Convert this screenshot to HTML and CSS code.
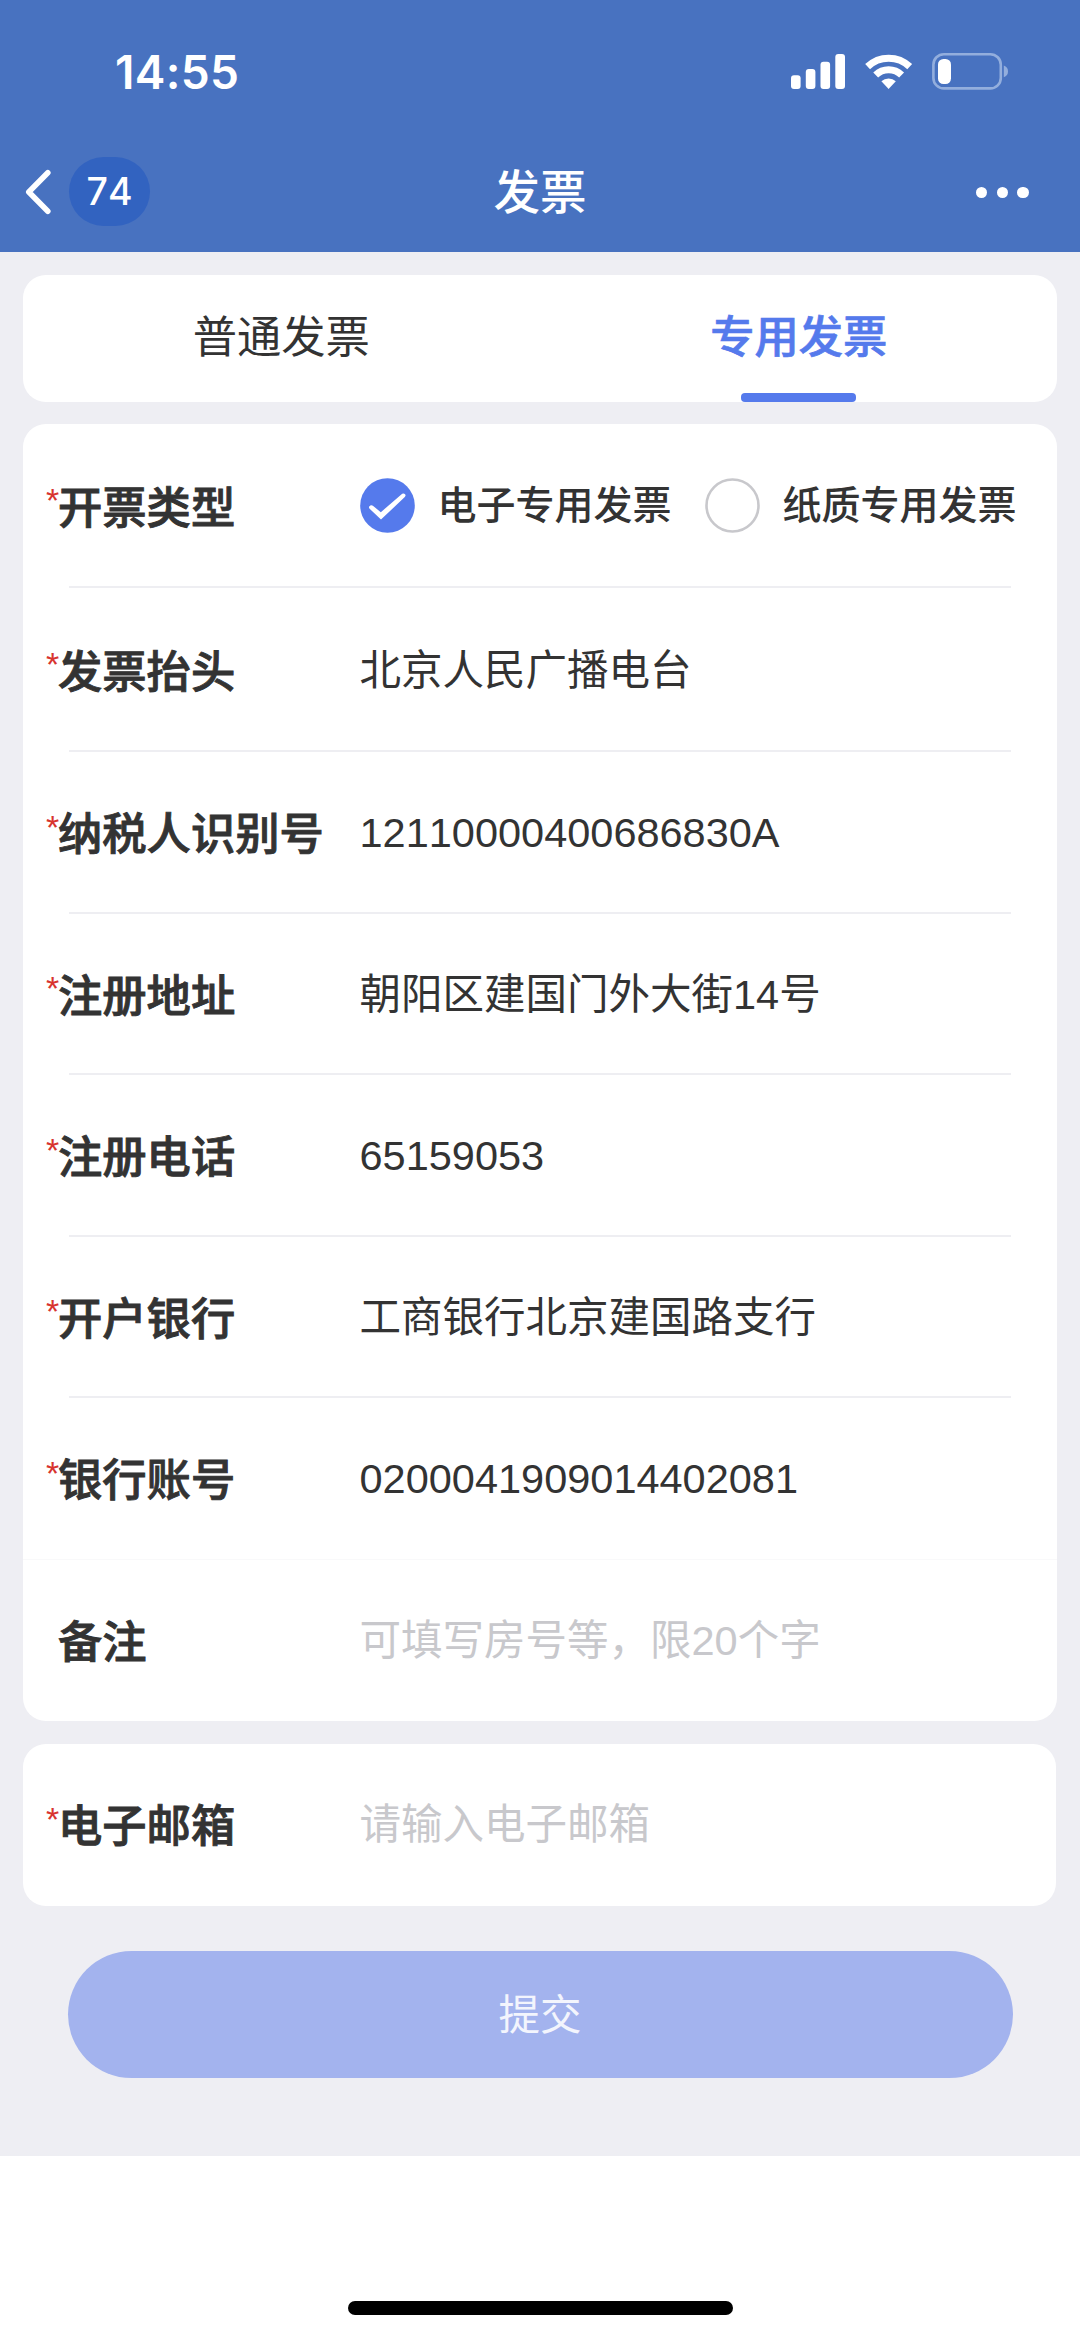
FILE: index.html
```html
<!DOCTYPE html>
<html lang="zh-CN">
<head>
  <meta charset="UTF-8">
  <meta name="viewport" content="width=device-width, initial-scale=1.0">
  <title>发票</title>
  <link rel="stylesheet" href="styles.css">
</head>
<body>
  <header class="header">
    <div class="status-bar">
      <span class="time">14:55</span>
      <svg class="status-icons" width="220" height="40" viewBox="0 0 220 40">
        <!-- signal -->
        <g fill="#fff">
          <rect x="2" y="23.3" width="9.6" height="13.7" rx="3"/>
          <rect x="16.8" y="17" width="9.6" height="20" rx="3"/>
          <rect x="31.5" y="9.7" width="9.6" height="27.3" rx="3"/>
          <rect x="46.3" y="2" width="9.7" height="35" rx="3"/>
        </g>
        <!-- wifi -->
        <g fill="none" stroke="#fff" stroke-width="7">
          <path d="M78.6 14.6 A30.5 30.5 0 0 1 120.7 14.6"/>
          <path d="M86.7 22.9 A18.6 18.6 0 0 1 112.6 22.9"/>
        </g>
        <path d="M99.6 37 L92.4 29.3 A10.5 10.5 0 0 1 106.8 29.3 Z" fill="#fff"/>
        <!-- battery -->
        <rect x="144.4" y="2.2" width="67.4" height="34.2" rx="10.5" fill="none" stroke="#93aedd" stroke-width="2.6"/>
        <rect x="149" y="7" width="13" height="25" rx="5.5" fill="#fff"/>
        <path d="M214.8 13.6 Q219 15.2 219 19.4 Q219 23.6 214.8 25.2 Z" fill="#93aedd"/>
      </svg>
    </div>
    <div class="nav-bar">
      <div class="nav-left">
        <svg class="back" width="26" height="46" viewBox="0 0 26 46">
          <path d="M22.8 3.8 L3.8 23 L22.8 42.2" fill="none" stroke="#fff" stroke-width="5.6" stroke-linecap="round" stroke-linejoin="round"/>
        </svg>
        <span class="badge">74</span>
      </div>
      <h1 class="title">发票</h1>
      <div class="more"><i></i><i></i><i></i></div>
    </div>
  </header>

  <main class="content">
    <div class="card tabs">
      <div class="tab">普通发票</div>
      <div class="tab active">专用发票</div>
    </div>

    <div class="card form">
      <div class="row tall">
        <span class="star">*</span>
        <span class="label">开票类型</span>
        <div class="options">
          <div class="option">
            <svg class="radio" width="55" height="55" viewBox="0 0 55 55">
              <circle cx="27.5" cy="27.5" r="27.3" fill="#557aec"/>
              <path d="M9.2 28.4 Q11.2 26.4 13.2 28 L20.8 34.2 L42.2 15.8 Q44.6 14.6 45.6 17 Q45.6 18.2 44.8 19 L21 41.6 L9.6 30.8 Q8.6 29.6 9.2 28.4 Z" fill="#fff"/>
            </svg>
            <span>电子专用发票</span>
          </div>
          <div class="option">
            <svg class="radio" width="55" height="55" viewBox="0 0 55 55">
              <circle cx="27.5" cy="27.5" r="26" fill="#fff" stroke="#c8c8cc" stroke-width="2.6"/>
            </svg>
            <span>纸质专用发票</span>
          </div>
        </div>
      </div>
      <div class="row tall">
        <span class="star">*</span>
        <span class="label">发票抬头</span>
        <span class="value">北京人民广播电台</span>
      </div>
      <div class="row">
        <span class="star">*</span>
        <span class="label">纳税人识别号</span>
        <span class="value">12110000400686830A</span>
      </div>
      <div class="row">
        <span class="star">*</span>
        <span class="label">注册地址</span>
        <span class="value">朝阳区建国门外大街14号</span>
      </div>
      <div class="row">
        <span class="star">*</span>
        <span class="label">注册电话</span>
        <span class="value">65159053</span>
      </div>
      <div class="row">
        <span class="star">*</span>
        <span class="label">开户银行</span>
        <span class="value">工商银行北京建国路支行</span>
      </div>
      <div class="row full-line">
        <span class="star">*</span>
        <span class="label">银行账号</span>
        <span class="value">0200041909014402081</span>
      </div>
      <div class="row last">
        <span class="star"></span>
        <span class="label">备注</span>
        <span class="value placeholder">可填写房号等，限20个字</span>
      </div>
    </div>

    <div class="card email">
      <div class="row last">
        <span class="star">*</span>
        <span class="label">电子邮箱</span>
        <span class="value placeholder">请输入电子邮箱</span>
      </div>
    </div>

    <button class="submit" type="button">提交</button>
  </main>

  <footer class="footer">
    <div class="home-bar"></div>
  </footer>
</body>
</html>
```
FILE: styles.css
```css
* {
  margin: 0;
  padding: 0;
  box-sizing: border-box;
}

body {
  width: 1080px;
  height: 2337px;
  font-family: "Liberation Sans", "Noto Sans CJK SC", sans-serif;
  font-kerning: none;
  background-color: #fff;
  color: #333;
  display: flex;
  flex-direction: column;
  overflow: hidden;
}

.header {
  height: 252px;
  background-color: #4872c0;
  color: #fff;
}

.status-bar {
  height: 132px;
  padding: 52px 71px 0 115px;
  display: flex;
  justify-content: space-between;
}

.time {
  font-family: Inter, sans-serif;
  font-size: 46px;
  font-weight: 600;
  line-height: 40px;
  letter-spacing: 0.3px;
}

.nav-bar {
  height: 119px;
  padding: 0 51px 0 25px;
  display: flex;
  justify-content: space-between;
  align-items: center;
}

.nav-left,
.more {
  flex: 1;
  display: flex;
  align-items: center;
}

.badge {
  width: 81px;
  height: 69px;
  margin-left: 18px;
  border-radius: 35px;
  background-color: #3263c0;
  font-family: Inter, sans-serif;
  font-size: 37.5px;
  font-weight: 500;
  line-height: 69px;
  text-align: center;
}

.title {
  margin-left: 26px;
  padding-bottom: 6px;
  font-size: 46.5px;
  font-weight: 500;
}

.more {
  justify-content: flex-end;
  gap: 9.3px;
  padding-top: 2px;
}

.more i {
  width: 11.6px;
  height: 11.6px;
  border-radius: 50%;
  background-color: #fff;
}

.content {
  height: 1904px;
  padding: 23px 23px 0;
  background-color: #eeeef3;
}

.card {
  background-color: #fff;
  border-radius: 23px;
}

.tabs {
  height: 127px;
  display: flex;
}

.tab {
  flex: 1;
  font-size: 44.3px;
  line-height: 126px;
  text-align: center;
}

.active {
  display: flex;
  flex-direction: column;
  align-items: center;
  padding-left: 1px;
  color: #557aec;
  font-weight: 500;
  -webkit-text-stroke: 0.7px #557aec;
}

.active::after {
  content: "";
  flex: none;
  width: 115px;
  height: 9px;
  margin-top: -8px;
  border-radius: 4px;
  background-color: #557aec;
}

.form {
  margin-top: 22px;
}

.row {
  height: 161.5px;
  padding-left: 23px;
  display: flex;
  align-items: center;
  background: linear-gradient(#eeeef2, #eeeef2) 46px 100% / 942px 2px no-repeat;
}

.tall {
  height: 164px;
}

.full-line {
  background: linear-gradient(#f9f9fa, #f9f9fa) 0 100% / 100% 1px no-repeat;
}

.last {
  background: none;
}

.star {
  width: 12px;
  height: 52px;
  color: #d8342f;
  font-size: 34px;
  line-height: 40px;
}

.label {
  width: 301.5px;
  padding-top: 5px;
  font-size: 44.3px;
  font-weight: 500;
  line-height: 60px;
  white-space: nowrap;
  -webkit-text-stroke: 0.9px #333;
}

.value {
  padding-top: 1px;
  font-size: 41.5px;
  line-height: 60px;
  white-space: nowrap;
}

.placeholder {
  color: #c8c8cc;
}

.options {
  display: flex;
  gap: 33px;
  padding-bottom: 2px;
}

.option {
  display: flex;
  align-items: center;
  gap: 23px;
  font-size: 39px;
  font-weight: 500;
  line-height: 55px;
  white-space: nowrap;
}

.email {
  margin-top: 23px;
  margin-right: 1px;
}

.submit {
  display: block;
  width: 945px;
  height: 127px;
  margin: 45px 0 0 44.5px;
  padding-bottom: 4px;
  border: none;
  border-radius: 64px;
  background-color: #a3b3ee;
  color: #f3f5fd;
  font-family: inherit;
  font-size: 41.5px;
}

.footer {
  flex: 1;
  display: flex;
  justify-content: center;
  align-items: flex-end;
  padding-bottom: 22px;
}

.home-bar {
  width: 385px;
  height: 14px;
  border-radius: 7px;
  background-color: #000;
}
```
